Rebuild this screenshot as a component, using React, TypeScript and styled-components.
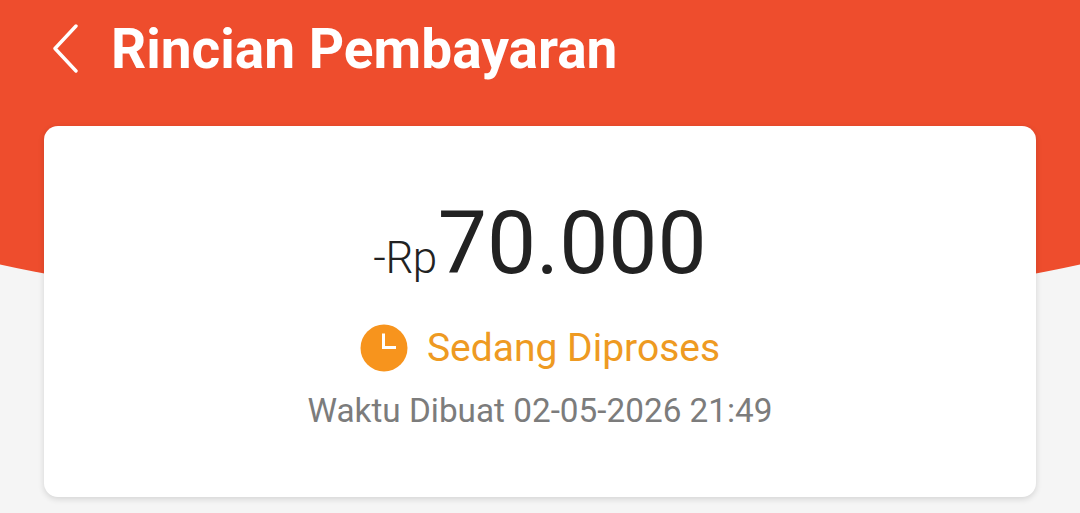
import React from 'react';
import styled, {createGlobalStyle} from 'styled-components';

const GlobalStyle = createGlobalStyle`
  html, body {
    margin: 0;
    padding: 0;
    width: 1080px;
    height: 513px;
    overflow: hidden;
    background: #f5f5f5;
    font-family: Roboto, "Liberation Sans", sans-serif;
  }
`;
const Page = styled.div`
  position: relative;
  width: 1080px;
  height: 513px;
  overflow: hidden;
  background: #f5f5f5;
`;
const Backdrop = styled.div`
  position: absolute;
  left: -260px;
  top: -71px;
  width: 1600px;
  height: 386px;
  border-radius: 50%;
  background: #ee4d2d;
`;
const Content = styled.div`
  position: relative;
  display: flex;
  flex-direction: column;
  padding: 0 44px;
`;
const Header = styled.header`
  display: flex;
  align-items: center;
  height: 98px;
  gap: 32px;
  padding-left: 9px;
  margin-bottom: 28px;
`;
const Title = styled.h1`
  margin: 0;
  color: #fff;
  font-size: 55px;
  line-height: 98px;
  font-weight: 700;
`;
const Card = styled.section`
  display: flex;
  flex-direction: column;
  align-items: center;
  height: 371px;
  box-sizing: border-box;
  padding-top: 67px;
  background: #fff;
  border-radius: 14px;
  box-shadow: 0 2px 6px rgba(0, 0, 0, 0.14);
`;
const Amount = styled.div`
  display: flex;
  align-items: baseline;
  color: #222;
  line-height: 100px;
  height: 100px;
`;
const Currency = styled.span`
  font-size: 44px;
  font-weight: 300;
  letter-spacing: -0.5px;
  margin-right: 1px;
`;
const Value = styled.span`
  font-size: 87.5px;
`;
const Status = styled.div`
  display: flex;
  align-items: center;
  gap: 19px;
  height: 48px;
  margin-top: 31px;
  color: #ee9a22;
  font-size: 39px;
`;
const Created = styled.div`
  margin-top: 19px;
  color: #7c7c7c;
  font-size: 33.3px;
  line-height: 40px;
`;

function BackIcon() {
  return (
    <svg width="26" height="52" viewBox="0 0 26 52" fill="none">
      <path d="M23 3L2 25.5 23 48" stroke="#fff" strokeWidth="3.4" strokeLinecap="round" strokeLinejoin="round"/>
    </svg>
  );
}

function ClockIcon() {
  return (
    <svg width="48" height="48" viewBox="0 0 48 48">
      <circle cx="24" cy="24" r="23.5" fill="#f7941d"/>
      <path d="M23.5 9.5V23.5H36" fill="none" stroke="#fff" strokeWidth="3"/>
    </svg>
  );
}

export default function App() {
  return (
    <Page>
      <GlobalStyle/>
      <Backdrop/>
      <Content>
        <Header>
          <BackIcon/>
          <Title>Rincian Pembayaran</Title>
        </Header>
        <Card>
          <Amount>
            <Currency>-Rp</Currency>
            <Value>70.000</Value>
          </Amount>
          <Status>
            <ClockIcon/>
            Sedang Diproses
          </Status>
          <Created>Waktu Dibuat 02-05-2026 21:49</Created>
        </Card>
      </Content>
    </Page>
  );
}
